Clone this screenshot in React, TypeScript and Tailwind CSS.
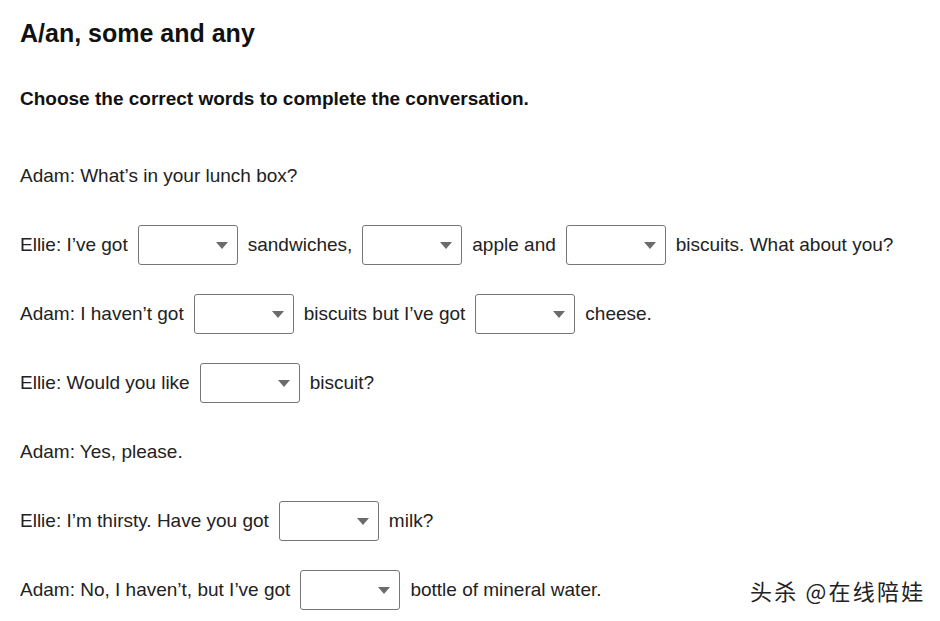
import React from "react";

type Part = string | { blank: true };

const B: Part = { blank: true };

const lines: Part[][] = [
  ["Adam: What\u2019s in your lunch box?"],
  ["Ellie: I\u2019ve got", B, "sandwiches,", B, "apple and", B, "biscuits. What about you?"],
  ["Adam: I haven\u2019t got", B, "biscuits but I\u2019ve got", B, "cheese."],
  ["Ellie: Would you like", B, "biscuit?"],
  ["Adam: Yes, please."],
  ["Ellie: I\u2019m thirsty. Have you got", B, "milk?"],
  ["Adam: No, I haven\u2019t, but I\u2019ve got", B, "bottle of mineral water."],
];

const Blank = () => (
  <div className="relative mx-[10px] h-[40px] w-[100px] rounded-[3px] border border-[#767676] bg-white">
    {/* dropdown caret */}
    <svg
      className="absolute right-[9px] top-[16px]"
      width="12"
      height="7"
      viewBox="0 0 12 7"
    >
      <path d="M0 0 L12 0 L6 7 Z" fill="#6b6b6b" />
    </svg>
  </div>
);

export default function App() {
  return (
    <div
      className="relative h-[621px] w-[940px] overflow-hidden bg-white pl-[20px] pt-[14px] text-[#222]"
      style={{ fontFamily: '"Liberation Sans", Arial, sans-serif' }}
    >
      {/* Title */}
      <div className="flex h-[40px] items-center text-[25px] font-bold text-[#111]">
        A/an, some and any
      </div>

      {/* Instruction */}
      <div className="mt-[25px] flex h-[40px] items-center text-[19px] font-bold text-[#111]">
        Choose the correct words to complete the conversation.
      </div>

      {/* Conversation */}
      <div className="mt-[37px] flex flex-col gap-[29px]">
        {lines.map((parts, i) => (
          <div key={i} className="flex h-[40px] items-center text-[19px]">
            {parts.map((p, j) =>
              typeof p === "string" ? (
                <span key={j} className="whitespace-nowrap">
                  {p}
                </span>
              ) : (
                <Blank key={j} />
              )
            )}
          </div>
        ))}
      </div>

      {/* Watermark */}
      <div
        className="absolute left-[750px] top-[574px] text-[22px] tracking-[2.2px] text-[#222]"
        style={{
          fontFamily: '"Noto Sans CJK SC", "Liberation Sans", sans-serif',
          textShadow: "1px 1px 0 #fff, -1px -1px 0 #fff",
        }}
      >
        头杀 @在线陪娃
      </div>
    </div>
  );
}
